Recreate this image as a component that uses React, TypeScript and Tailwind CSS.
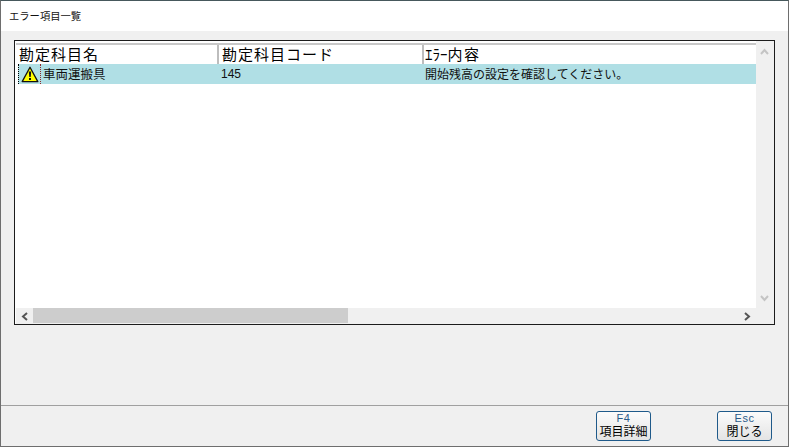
const font = { fontFamily: '"Noto Sans CJK JP", "Liberation Sans", sans-serif' }

function HeaderCell({ width, children }: { width: string; children: React.ReactNode }) {
  return (
    <div className={`${width} h-[19px] flex items-center pl-[3px] pb-[2px] border-r-2 border-[#bdbdbd] text-black text-[15px] tracking-[1px] leading-none whitespace-nowrap`}>
      {children}
    </div>
  )
}

function FooterButton({ fkey, label }: { fkey: string; label: string }) {
  return (
    <button className="w-[55px] h-[30px] rounded-[3px] border-[1.5px] border-[#1f5a8a] bg-gradient-to-b from-[#fbfbfb] to-[#e4e4e4] flex flex-col items-center justify-center">
      <span className="block text-[11px] leading-[11px] text-[#2a5a8a] tracking-[0.5px]" style={{ fontFamily: '"Liberation Sans", sans-serif' }}>{fkey}</span>
      <span className="block text-[12px] leading-[14px] text-black">{label}</span>
    </button>
  )
}

export default function App() {
  return (
    <div className="w-[789px] h-[447px] flex flex-col bg-[#f0f0f0] border border-[#6e6e6e] border-t-[#46585c] overflow-hidden" style={font}>
      <div className="h-[30px] bg-white flex items-center pl-[8px] pb-[1px] text-[10.3px] text-[#111] shrink-0">エラー項目一覧</div>

      <div className="flex-1 flex flex-col px-[13px] pt-[9px]">
        <div className="w-[761px] h-[285px] border border-[#1c1c1c] bg-white flex flex-col pl-[1px]">
          <div className="flex-1 flex min-h-0">
            <div className="flex-1 flex flex-col pt-[2px]">
              <div className="flex h-[21px] border-t-2 border-[#c8c8c8]">
                <HeaderCell width="w-[203px]">勘定科目名</HeaderCell>
                <HeaderCell width="w-[205px]">勘定科目コード</HeaderCell>
                <HeaderCell width="flex-1 !border-r-0 !tracking-normal !pl-[1px]">ｴﾗｰ<span className="tracking-[1.5px]">内容</span></HeaderCell>
              </div>
              <div className="flex h-[20px] ml-[2px] bg-[#b0dfe5] text-[12px] text-[#111] items-center">
                <div className="w-[201px] flex items-center h-full">
                  <div className="h-full w-[22px] border-l border-dotted border-black flex items-center justify-center shrink-0">
                    <svg width="18" height="17" viewBox="0 0 18 17">
                      <path d="M9 1.2 L16.8 15.6 H1.2 Z" fill="#ffff00" stroke="#111" strokeWidth="1.3" strokeLinejoin="round" />
                      <path d="M7.8 5.5 H10.2 L9.7 11 H8.3 Z" fill="#111" />
                      <rect x="8" y="12" width="2" height="2" fill="#111" />
                    </svg>
                  </div>
                  <span className="h-full border-l border-dotted border-[#8a2a2a] pl-[2px] flex items-center text-[12.5px] whitespace-nowrap">車両運搬具</span>
                </div>
                <div className="w-[205px] pl-[2px] text-[12px]" style={{ fontFamily: '"Liberation Sans", sans-serif' }}>145</div>
                <div className="flex-1 pl-[1px] text-[12px] whitespace-nowrap">開始残高の設定を確認してください。</div>
              </div>
            </div>
            <div className="w-[18px] bg-[#f0f0f0] flex flex-col items-center justify-between pt-[7px] pb-[6px] pr-[1px] text-[#c4c4c4] shrink-0">
              <svg width="9" height="7" viewBox="0 0 9 7"><path d="M1 6 L4.5 2 L8 6" fill="none" stroke="currentColor" strokeWidth="2" /></svg>
              <svg width="9" height="7" viewBox="0 0 9 7"><path d="M1 1 L4.5 5 L8 1" fill="none" stroke="currentColor" strokeWidth="2" /></svg>
            </div>
          </div>
          <div className="h-[16px] flex bg-[#f0f0f0] shrink-0 items-stretch">
            <div className="w-[17px] flex items-center justify-center">
              <svg width="7" height="9" viewBox="0 0 7 9"><path d="M6 1 L2 4.5 L6 8" fill="none" stroke="#555" strokeWidth="2" /></svg>
            </div>
            <div className="w-[315px] h-[15px] bg-[#cdcdcd]" />
            <div className="flex-1" />
            <div className="w-[17px] flex items-center justify-center mr-[18px]">
              <svg width="7" height="9" viewBox="0 0 7 9"><path d="M1 1 L5 4.5 L1 8" fill="none" stroke="#555" strokeWidth="2" /></svg>
            </div>
          </div>
        </div>
      </div>

      <div className="h-[41px] border-t border-[#a0a0a0] flex items-center justify-end pr-[16px] pb-[1px] gap-[66px] shrink-0">
        <FooterButton fkey="F4" label="項目詳細" />
        <FooterButton fkey="Esc" label="閉じる" />
      </div>
    </div>
  )
}
